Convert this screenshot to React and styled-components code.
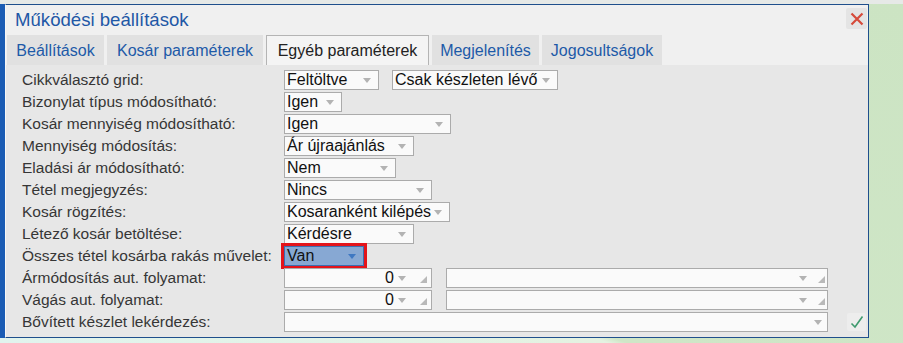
import React from "react";
import styled, { createGlobalStyle } from "styled-components";

const GlobalStyle = createGlobalStyle`
  html, body {
    margin: 0;
    padding: 0;
  }
  body {
    font-family: "Liberation Sans", Arial, sans-serif;
    overflow: hidden;
  }
`;

const Page = styled.div`
  width: 903px;
  height: 343px;
  display: flex;
  flex-direction: column;
  background: linear-gradient(200deg, #cce4c3 0%, #cfe6c7 66%, #e4f2e1 67%, #e1f4ee 100%);
`;

const TopStrip = styled.div`
  flex: none;
  height: 4px;
  background: #e6e9e7;
`;

const Middle = styled.div`
  flex: none;
  display: flex;
  height: 334px;
`;

const LeftEdge = styled.div`
  flex: none;
  width: 5px;
  background: #1b5cb4;
`;

const Dialog = styled.div`
  flex: none;
  width: 864px;
  box-sizing: border-box;
  border: 1px solid #1f4f8c;
  border-left-color: #f7f7f7;
  background: #f0f0f0;
  display: flex;
  flex-direction: column;
`;

const TitleBar = styled.div`
  flex: none;
  height: 30px;
  display: flex;
  align-items: center;
  padding: 0 1px 0 9px;
`;

const Title = styled.div`
  font-size: 18.6px;
  color: #1f58a6;
  white-space: nowrap;
`;

const IconButton = styled.div`
  flex: none;
  width: ${(p) => p.$w}px;
  height: ${(p) => p.$h}px;
  margin-left: auto;
  display: flex;
  align-items: center;
  justify-content: center;
  background: ${(p) => p.$bg};
  border-radius: 2px;
`;

const CloseButton = styled(IconButton)`
  align-self: flex-start;
  margin-top: 3px;
`;

const TabBar = styled.div`
  flex: none;
  height: 30px;
  display: flex;
  gap: 3px;
  padding-left: 1px;
`;

const Tab = styled.div`
  flex: none;
  width: ${(p) => p.$w}px;
  display: flex;
  align-items: center;
  justify-content: center;
  box-sizing: border-box;
  font-size: 16px;
  white-space: nowrap;
  border: 1px solid ${(p) => (p.$active ? "#b4b4b4" : "transparent")};
  border-bottom: none;
  background: ${(p) => (p.$active ? "#f4f4f4" : "#e1e1e1")};
  color: ${(p) => (p.$active ? "#222" : "#1d5aa8")};
`;

const Panel = styled.div`
  flex: 1;
  background: #e7e7e7;
  padding: 4px 0 0 16px;
  display: flex;
  flex-direction: column;
`;

const Row = styled.div`
  flex: none;
  height: 22px;
  display: flex;
  align-items: center;
`;

const Label = styled.div`
  flex: none;
  width: 262px;
  font-size: 15.5px;
  color: #363636;
  white-space: nowrap;
`;

const Fields = styled.div`
  display: flex;
  align-items: center;
  gap: ${(p) => p.$gap || 13}px;
`;

const Field = styled.div`
  flex: none;
  box-sizing: border-box;
  width: ${(p) => p.$w}px;
  height: 20px;
  display: flex;
  align-items: center;
  padding: 0 ${(p) => p.$pr ?? 7}px 0 2px;
  border: 1px solid ${(p) => (p.$selected ? "#3c6db0" : "#ababab")};
  background: ${(p) => (p.$selected ? "#87a8d3" : "#fafafa")};
  outline: ${(p) => (p.$marked ? "3px solid #e3141b" : "none")};
  outline-offset: 0;
  font-size: 16px;
  color: #111;
  white-space: nowrap;
`;

const Value = styled.div`
  flex: 1;
  min-width: 0;
  text-align: ${(p) => p.$align || "left"};
`;

const Caret = styled.div`
  flex: none;
  width: 0;
  height: 0;
  margin-left: ${(p) => p.$ml || 0}px;
  border-left: 4.5px solid transparent;
  border-right: 4.5px solid transparent;
  border-top: 5px solid ${(p) => p.$color || "#b3b3b3"};
`;

const Grip = styled.div`
  flex: none;
  width: 0;
  height: 0;
  margin-left: ${(p) => p.$ml}px;
  margin-top: 3px;
  border-left: 7px solid transparent;
  border-bottom: 7px solid #b9b9b9;
`;

const CheckButton = styled(IconButton)`
  margin-right: 2px;
`;

const Select = ({ value, w, selected, marked }) => (
  <Field $w={w} $selected={selected} $marked={marked}>
    <Value>{value}</Value>
    <Caret $color={selected ? "#3f78c2" : undefined} />
  </Field>
);

const rows = [
  { label: "Cikkválasztó grid:", fields: [{ value: "Feltöltve", w: 95 }, { value: "Csak készleten lévő", w: 166 }] },
  { label: "Bizonylat típus módosítható:", fields: [{ value: "Igen", w: 58 }] },
  { label: "Kosár mennyiség módosítható:", fields: [{ value: "Igen", w: 167 }] },
  { label: "Mennyiség módosítás:", fields: [{ value: "Ár újraajánlás", w: 130 }] },
  { label: "Eladási ár módosítható:", fields: [{ value: "Nem", w: 112 }] },
  { label: "Tétel megjegyzés:", fields: [{ value: "Nincs", w: 148 }] },
  { label: "Kosár rögzítés:", fields: [{ value: "Kosaranként kilépés", w: 166 }] },
  { label: "Létező kosár betöltése:", fields: [{ value: "Kérdésre", w: 130 }] },
  { label: "Összes tétel kosárba rakás művelet:", fields: [{ value: "Van", w: 80, selected: true, marked: true }] },
];

const ProcessRow = ({ label }) => (
  <Row>
    <Label>{label}</Label>
    <Fields $gap={14}>
      <Field $w={148} $pr={4}>
        <Value $align="right">0</Value>
        <Caret $ml={4} />
        <Grip $ml={14} />
      </Field>
      <Field $w={382} $pr={2}>
        <Value />
        <Caret />
        <Grip $ml={11} />
      </Field>
    </Fields>
  </Row>
);

const tabs = [
  { name: "Beállítások", w: 97 },
  { name: "Kosár paraméterek", w: 156 },
  { name: "Egyéb paraméterek", w: 163 },
  { name: "Megjelenítés", w: 107 },
  { name: "Jogosultságok", w: 120 },
];

export default function App() {
  return (
    <>
      <GlobalStyle />
      <Page>
        <TopStrip />
        <Middle>
          <LeftEdge />
          <Dialog>
            <TitleBar>
              <Title>Működési beállítások</Title>
              <CloseButton $w={21} $h={21} $bg="#e4e4e4">
                <svg width="14" height="14" viewBox="0 0 14 14">
                  <path d="M1.5 1.5 L12.5 12.5 M12.5 1.5 L1.5 12.5" stroke="#d64a3b" strokeWidth="2.2" fill="none" />
                </svg>
              </CloseButton>
            </TitleBar>
            <TabBar>
              {tabs.map((t, i) => (
                <Tab key={t.name} $w={t.w} $active={i === 2}>
                  {t.name}
                </Tab>
              ))}
            </TabBar>
            <Panel>
              {rows.map((r) => (
                <Row key={r.label}>
                  <Label>{r.label}</Label>
                  <Fields>
                    {r.fields.map((f, i) => (
                      <Select key={i} {...f} />
                    ))}
                  </Fields>
                </Row>
              ))}
              <ProcessRow label="Ármódosítás aut. folyamat:" />
              <ProcessRow label="Vágás aut. folyamat:" />
              <Row>
                <Label>Bővített készlet lekérdezés:</Label>
                <Field $w={544} $pr={5}>
                  <Value />
                  <Caret />
                </Field>
                <CheckButton $w={19} $h={18} $bg="#ededed">
                  <svg width="14" height="14" viewBox="0 0 14 14">
                    <path d="M1.5 8.5 L5 12 L12.5 1.5" stroke="#3f9a6e" strokeWidth="1.6" fill="none" />
                  </svg>
                </CheckButton>
              </Row>
            </Panel>
          </Dialog>
        </Middle>
      </Page>
    </>
  );
}
